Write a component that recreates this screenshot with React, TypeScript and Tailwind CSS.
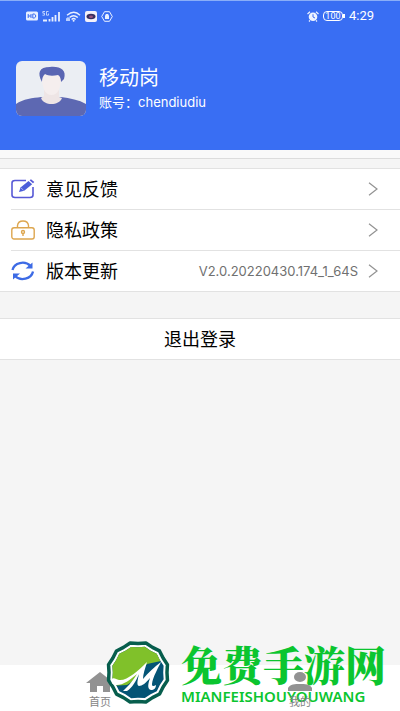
import React from 'react';

const fontStack = "font-['Roboto','Noto_Sans_CJK_SC',sans-serif]";

function StatusBar() {
  return (
    <div className="flex h-[30px] items-center justify-between px-[26px] text-white">
      <div className="flex items-center gap-1">
        <svg width="12" height="10" viewBox="0 0 12 10" aria-hidden="true">
          <rect width="12" height="9" y="0.5" rx="1.5" fill="#e8efff" />
          <path d="M2.2 3v4M5 3v4M2.2 5H5M6.8 3v4h1.4l1.4-1V4L8.200 3z" stroke="#3a6cf2" fill="none" />
        </svg>
        <svg width="19" height="11" viewBox="0 0 19 11" aria-hidden="true">
          <path d="M3 .5H.8v1.700h1.700v2H.5M6.500 .5H4.500v3.700h2V2.500" stroke="#dce7ff" strokeWidth="0.8" fill="none" />
          <path d="M1 9.500h4M7.500 10.500V8M10.500 10.500V6M13.500 10.500V4M17 10.500V1" stroke="#e8efff" strokeWidth="1.800" fill="none" />
        </svg>
        <svg width="16" height="11" viewBox="0 0 16 11" aria-hidden="true">
          <path d="M2 4.200q7-6 13 0M4.500 6.500q4-3.600 8.300 0M6.600 8.500q2-1.800 4 0" stroke="#e8efff" strokeWidth="1.400" fill="none" />
          <path d="M1 10V7.500l2-1.500 2 1.500V10z" fill="#b9ceff" />
          <circle cx="8.600" cy="9.800" r="1" fill="#e8efff" />
        </svg>
        <svg width="12" height="11" viewBox="0 0 12 11" aria-hidden="true">
          <rect width="12" height="11" rx="2" fill="#f4f1fa" />
          <ellipse cx="6" cy="5.500" rx="4.500" ry="2.700" fill="#39305f" />
          <ellipse cx="6" cy="5.800" rx="2" ry="1.200" fill="#9a5380" />
        </svg>
        <svg width="12" height="11" viewBox="0 0 12 11" aria-hidden="true">
          <path d="M3.500 .7h5l2.800 4.800-2.800 4.800h-5L.7 5.500z" stroke="#e8efff" fill="none" />
          <path d="M4 8V4.500l1-1.500h2l1 1.500V8z" fill="#e8efff" />
        </svg>
      </div>
      <div className="flex items-center">
        <svg width="12" height="11" viewBox="0 0 12 11" aria-hidden="true">
          <circle cx="6" cy="5.700" r="4.300" fill="#eef3ff" />
          <path d="M.5 3 3 .8M11.500 3 9 .8M3 9.300 2 10.500M9 9.300l1 1.200" stroke="#eef3ff" strokeWidth="1.200" />
          <path d="M6 3.200v2.800l2 1" stroke="#3a6cf2" fill="none" />
        </svg>
        <div className="ml-1 flex h-[10px] w-5 items-center justify-center rounded-sm border border-white text-[9px] leading-none">100</div>
        <div className="mr-1 h-1 w-[2px] bg-white" />
        <span className="text-[13px] leading-4">4:29</span>
      </div>
    </div>
  );
}

function Avatar() {
  return (
    <svg width="70" height="55" viewBox="0 0 70 55" role="img" aria-label="头像">
      <defs>
        <clipPath id="avatar-clip"><rect width="70" height="55" rx="6" /></clipPath>
      </defs>
      <g clipPath="url(#avatar-clip)">
        <rect width="70" height="55" fill="#ebeef3" />
        <path d="M0 43C7 38 17 37 25 36h20c9 1 18 3 25 7v12H0z" fill="#5d68b2" />
        <path d="M28 29h15v7l3 1c-3 8-18 8-21 0l3-2z" fill="#eee5e5" />
        <path d="M26 16c0 11 3 18 9.500 18S45 27 45 16c-4-5-15-5-19 0z" fill="#f5eeee" />
        <path d="M26 21C21 12 23 6 34 6c10-1 17 3 14 12l-3 3c0-3-1-6-3-7-5 1-10 1-13-1-2 2-3 4-3 8z" fill="#5965b3" />
      </g>
    </svg>
  );
}

function EditIcon() {
  return (
    <svg width="24" height="20" viewBox="0 0 24 20" fill="none" aria-hidden="true">
      <path d="M15 1.500H4Q1 1.500 1 4v12q0 2.500 3 2.500h15q3 0 3-2.500V8" stroke="#5759d6" strokeWidth="1.600" />
      <path d="m8 13 1.500-4.500L17.500 2l3.700 3.200-8 6.600z" fill="#4c5ed9" />
      <path d="m18.600 1.200 1.400-1 3.300 2.900-1.300 1.200z" fill="#5759d6" />
      <path d="m10 9 2.500 2.200" stroke="#fff" strokeWidth="0.500" />
    </svg>
  );
}

function LockIcon() {
  return (
    <svg width="24" height="20" viewBox="0 0 24 20" fill="none" stroke="#dda64f" strokeWidth="1.400" aria-hidden="true">
      <rect x="0.800" y="7.700" width="22.400" height="11.300" rx="2.200" />
      <path d="M6.500 7.500V5.500Q7 1 12 1t5.500 4.500v2" />
      <circle cx="12" cy="12" r="1.500" />
      <path d="M12 13.500V16" />
    </svg>
  );
}

function RefreshIcon() {
  return (
    <svg width="24" height="20" viewBox="0 0 24 20" fill="none" aria-hidden="true">
      <path d="M1.500 9C3 1.500 14-.8 19.500 5M22 10.500C20.500 18 9.500 20.500 4 15" stroke="#3d6be5" strokeWidth="2.300" />
      <path d="M21.500 1.500v6h-7zM2 18.500V12.500h7z" fill="#3d6be5" />
    </svg>
  );
}

function Row({ icon, label, value, last }: { icon: React.ReactNode; label: string; value?: string; last?: boolean }) {
  return (
    <li className="pl-[11px]">
      <button type="button" className={`flex w-full items-center pr-[22px] text-left ${last ? 'h-10' : 'h-[41px] border-b border-[#e2e2e2]'}`}>
        {icon}
        <span className="ml-[11px] flex-1 pt-[2px] text-lg leading-6 text-black">{label}</span>
        {value && <span className="mr-[10px] font-['Inter',sans-serif] text-[13px] leading-4 text-[#707070]">{value}</span>}
        <svg width="10" height="14" viewBox="0 0 10 14" fill="none" aria-hidden="true">
          <path d="m1 .8 8 6.200-8 6.200" stroke="#929292" strokeWidth="1.200" />
        </svg>
      </button>
    </li>
  );
}

const badge =
  'M30.500 0 28 7.500 26.400 15.200 20.500 20.500 15.200 26.400 7.500 28 0 30.500-7.500 28-15.200 26.400-20.500 20.500-26.400 15.200-28 7.500-30.500 0-28-7.500-26.400-15.200-20.500-20.500-15.200-26.400-7.500-28 0-30.500 7.500-28 15.200-26.400 20.500-20.500 26.400-15.200 28-7.500z';

function SiteMark() {
  return (
    <div className="pointer-events-none absolute bottom-[5px] left-[105px] z-10 flex items-center gap-[10px]">
      <svg width="66" height="66" viewBox="0 0 66 66" aria-hidden="true">
        <defs>
          <clipPath id="badge-clip"><path d={badge} transform="translate(33 32.500) scale(.87)" /></clipPath>
        </defs>
        <path d={badge} transform="translate(33 32.500) rotate(15)" fill="#fff" stroke="#075e4d" strokeWidth="3.500" strokeLinejoin="round" />
        <g clipPath="url(#badge-clip)" transform="rotate(15 33 32.500)">
          <g transform="rotate(-15 33 32.500)">
            <rect width="66" height="66" fill="#045475" />
            <path d="M0 0h66v17L56 21 42 24C36 31 32 39 22 45L0 46z" fill="#80c12a" />
          </g>
        </g>
        <path d="M6 39c3-2 5 0 8 1 8 1 19-9 28-18-2 7-4 12-4 17 5-6 11-12 18-17-4 8-8 15-9 22 0 3 2 2 4 1 0 3-2 5-5 5-4-1-3-6-1-12-4 5-8 8-11 8-3-1-1-7 0-12-3 7-7 14-12 17h-4l4-4c3-3 7-8 10-13-7 6-15 12-22 11-4-1-3-3-4-6z" fill="#fff" />
      </svg>
      <div className="flex flex-col text-[#0bc52f]">
        <span className="font-['Noto_Serif_CJK_SC','Noto_Sans_CJK_SC',serif] text-[41px] leading-[46px] font-black whitespace-nowrap">免费手游网</span>
        <span className="font-['Noto_Sans',sans-serif] text-[15px] leading-[18px] font-semibold">MIANFEISHOUYOUWANG</span>
      </div>
    </div>
  );
}

export default function App() {
  return (
    <div className={`relative flex min-h-screen flex-col bg-[#f5f5f5] ${fontStack}`}>
      <header className="border-t border-[#8aaef8] bg-[#396ef3] pb-[34px] text-white">
        <StatusBar />
        <div className="flex items-center gap-[13px] pt-[30px] pl-4">
          <Avatar />
          <div className="flex flex-col">
            <h1 className="text-xl leading-7 font-normal">移动岗</h1>
            <p className="text-[13px] leading-5">
              账号：<span className="font-['Inter',sans-serif]">chendiudiu</span>
            </p>
          </div>
        </div>
      </header>
      <div className="h-[9px] border-b border-[#dcdcdc] bg-[#f9f9f9]" />
      <main className="flex-1">
        <ul className="mt-[9px] border-y border-[#e2e2e2] bg-white">
          <Row icon={<EditIcon />} label="意见反馈" />
          <Row icon={<LockIcon />} label="隐私政策" />
          <Row icon={<RefreshIcon />} label="版本更新" value="V2.0.20220430.174_1_64S" last />
        </ul>
        <button type="button" className="mt-[26px] h-[42px] w-full border-y border-[#e2e2e2] bg-white pt-[2px] text-lg text-black">退出登录</button>
      </main>
      <nav className="grid h-[46px] grid-cols-2 bg-white text-[11px] leading-4 text-[#858585]">
        <button type="button" className="flex flex-col items-center gap-[2px] pt-[7px]">
          <svg width="28" height="21" viewBox="0 0 28 21" fill="#929292" aria-hidden="true">
            <path d="M14 0 28 11h-4v9h-7v-6h-6v6H4v-9H0z" />
          </svg>
          首页
        </button>
        <button type="button" className="relative z-20 flex flex-col items-center gap-[2px] pt-[7px]">
          <svg width="26" height="21" viewBox="0 0 26 21" fill="#929292" aria-hidden="true">
            <ellipse cx="13" cy="5" rx="6" ry="5" />
            <path d="M1 19v-3c2-4 7-4 12-4s10 0 12 4v3z" />
          </svg>
          我的
        </button>
      </nav>
      <SiteMark />
    </div>
  );
}
